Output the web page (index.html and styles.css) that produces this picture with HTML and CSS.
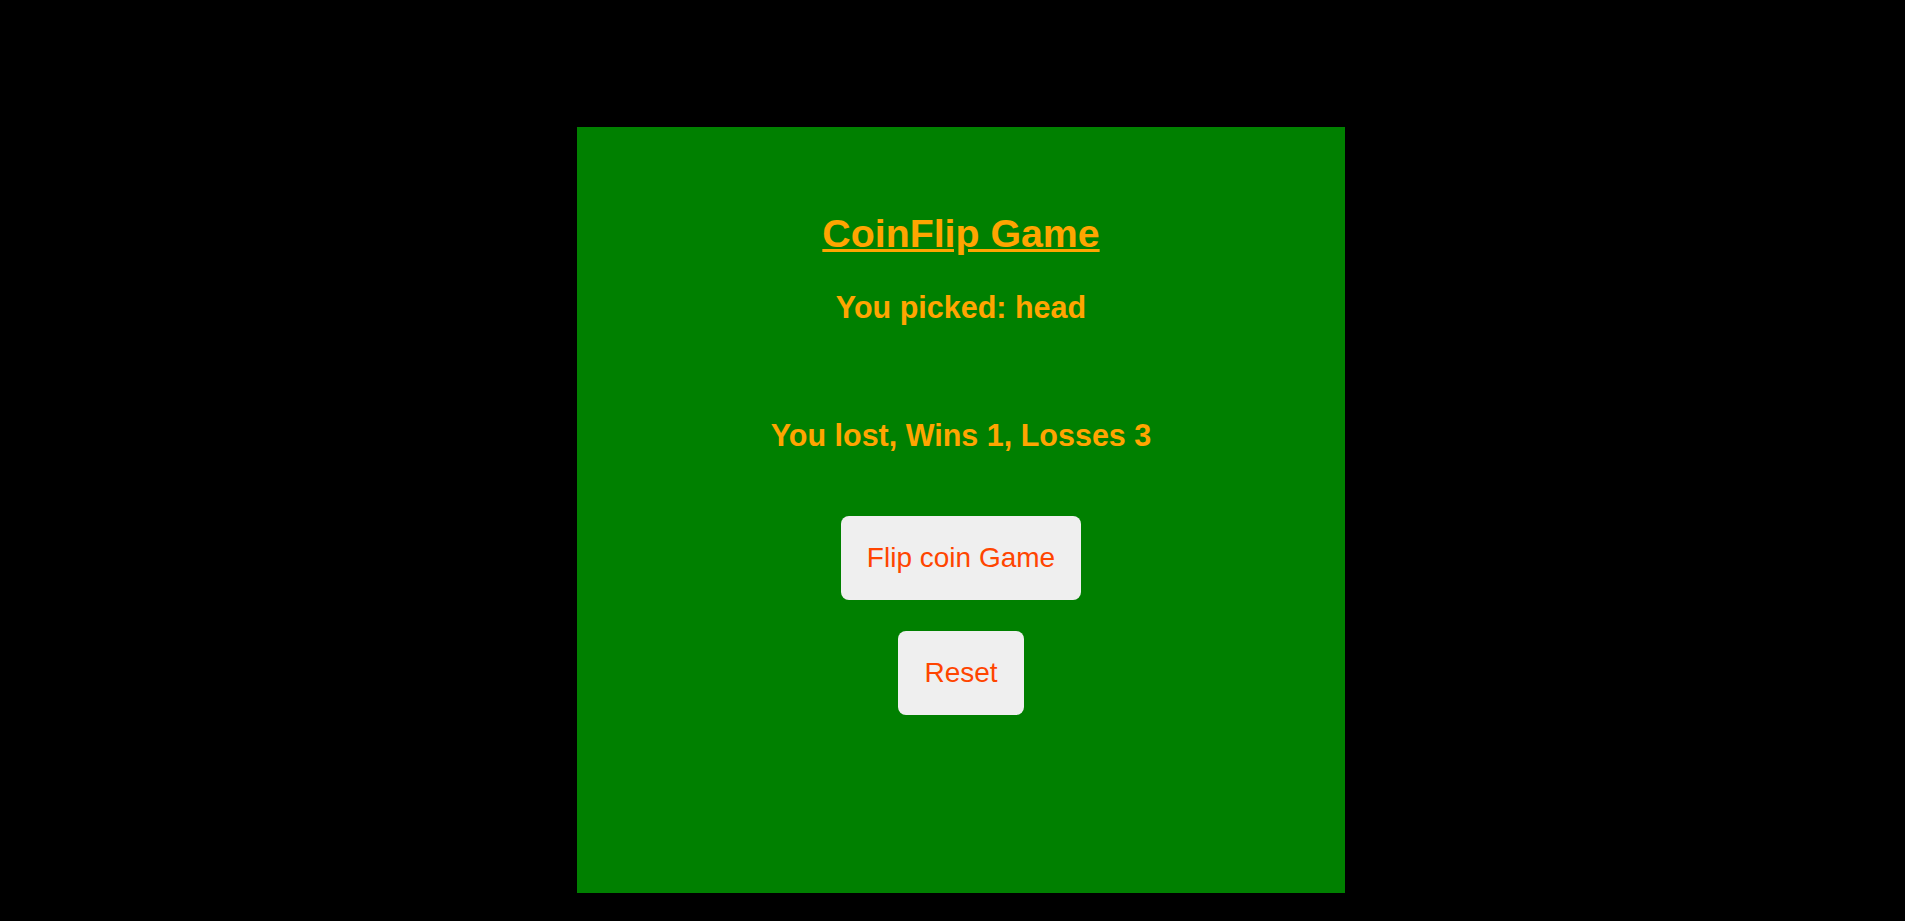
FILE: index.html
```html
<!DOCTYPE html>
<html lang="en">
<head>
<meta charset="utf-8">
<title>CoinFlip Game</title>
<link rel="stylesheet" href="styles.css">
</head>
<body>
<div class="page">
  <main class="board">
    <h1 class="title">CoinFlip Game</h1>
    <h2 class="picked">You picked: head</h2>
    <h2 class="result">You lost, Wins 1, Losses 3</h2>
    <button class="btn btn-flip" type="button">Flip coin Game</button>
    <button class="btn btn-reset" type="button">Reset</button>
  </main>
</div>
</body>
</html>
```
FILE: styles.css
```css
html, body {
  margin: 0;
  padding: 0;
  background: #000000;
  height: 100%;
  overflow: hidden;
}

body {
  font-family: "Liberation Sans", Arial, sans-serif;
}

.page {
  display: flex;
  justify-content: center;
  padding: 127px 0 0 17px;
}

.board {
  width: 768px;
  height: 766px;
  background: #008000;
  display: flex;
  flex-direction: column;
  align-items: center;
  padding-top: 84px;
  box-sizing: border-box;
}

.title {
  margin: 0;
  font-size: 39.3px;
  font-weight: bold;
  color: #ffa500;
  text-decoration: underline;
  line-height: normal;
}

.picked {
  margin: 33.5px 0 0;
  font-size: 30.5px;
  font-weight: bold;
  color: #ffa500;
  line-height: normal;
}

.result {
  margin: 93px 0 0;
  font-size: 30.5px;
  font-weight: bold;
  color: #ffa500;
  line-height: normal;
}

.btn {
  font-family: "Liberation Sans", Arial, sans-serif;
  font-size: 28px;
  color: #ff4500;
  background: #efefef;
  border: none;
  border-radius: 8px;
  padding: 26px 26px;
  line-height: normal;
  cursor: pointer;
}

.btn-flip {
  margin-top: 63.5px;
}

.btn-reset {
  margin-top: 31px;
}
```
